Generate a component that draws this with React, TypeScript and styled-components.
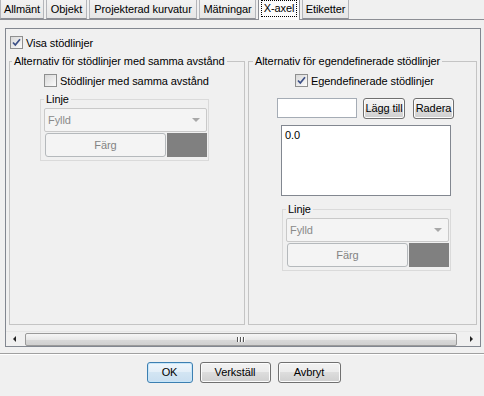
import React from 'react'
import styled, { createGlobalStyle } from 'styled-components'

const GlobalStyle = createGlobalStyle`
    html, body {
        margin: 0;
        padding: 0;
        background: #f0f0f0;
    }
    body {
        font-family: "Liberation Sans", Arial, sans-serif;
        font-size: 11px;
        letter-spacing: -0.08px;
        color: #000;
    }
`

const Dialog = styled.div`
    width: 484px;
    height: 396px;
    overflow: hidden;
    background: #f0f0f0;
    display: flex;
    flex-direction: column;
`

const TabBar = styled.div`
    display: flex;
    gap: 2px;
    height: 19px;
    align-items: flex-start;
    position: relative;
    z-index: 1;
`

const Tab = styled.div<{ $w: number; $active?: boolean }>`
    width: ${(p) => p.$w}px;
    height: ${(p) => (p.$active ? 20 : 19)}px;
    box-sizing: border-box;
    border: 1px solid ${(p) => (p.$active ? '#8c8e94' : '#b4b6bb')};
    border-top: none;
    border-bottom: ${(p) => (p.$active ? 'none' : '1px solid #8c8e94')};
    background: ${(p) =>
        p.$active ? '#fcfcfc' : 'linear-gradient(#f2f2f2, #e6e6e6)'};
    display: flex;
    align-items: center;
    justify-content: center;
    padding-bottom: ${(p) => (p.$active ? 4 : 1)}px;
    white-space: nowrap;
`

const FocusText = styled.span`
    outline: 1px dotted #000;
    padding: 1px 2px 2px;
`

const TabPanel = styled.div`
    border-top: 1px solid #8c8e94;
    padding: 8px 3px 0 5px;
`

const ScrollPane = styled.div`
    width: 476px;
    height: 319px;
    box-sizing: border-box;
    border: 1px solid #828790;
    display: flex;
    flex-direction: column;
`

const Viewport = styled.div`
    height: 302px;
    overflow: hidden;
    padding-top: 5px;
    box-sizing: border-box;
    display: flex;
    flex-direction: column;
`

const CheckRow = styled.label<{ $ml: number }>`
    display: flex;
    align-items: center;
    gap: 3px;
    height: 17px;
    margin-left: ${(p) => p.$ml}px;
    white-space: nowrap;
`

const Box = styled.span`
    width: 13px;
    height: 13px;
    box-sizing: border-box;
    border: 1px solid #8e8f8f;
    background: linear-gradient(135deg, #d8d8d8, #fbfbfb);
    display: inline-flex;
    align-items: center;
    justify-content: center;
    flex: none;
`

const Groups = styled.div`
    display: flex;
    gap: 3px;
    margin: 4px 0 0 3px;
`

const Group = styled.fieldset<{ $w: number; $pl: number }>`
    width: ${(p) => p.$w}px;
    height: 270px;
    box-sizing: border-box;
    margin: 0;
    padding: 4px 0 0 ${(p) => p.$pl}px;
    border: 1px solid #c4c4c4;
    display: flex;
    flex-direction: column;
    align-items: flex-start;
    min-width: 0;
`

const Legend = styled.legend`
    padding: 0 2px;
    line-height: 13px;
    white-space: nowrap;
`

const LineGroup = styled.fieldset<{ $ml: number; $mt: number }>`
    width: 169px;
    box-sizing: border-box;
    margin: ${(p) => p.$mt}px 0 0 ${(p) => p.$ml}px;
    padding: 2px 1px 3px 3px;
    border: 1px solid #dadada;
    min-width: 0;
`

const Combo = styled.div`
    width: 163px;
    height: 24px;
    box-sizing: border-box;
    border: 1px solid #c9c9c9;
    border-radius: 2px;
    background: #f4f4f4;
    color: #8a8a8a;
    display: flex;
    align-items: center;
    justify-content: space-between;
    padding: 0 6px 0 3px;
`

const ComboArrow = styled.span`
    width: 0;
    height: 0;
    border-left: 4px solid transparent;
    border-right: 4px solid transparent;
    border-top: 4px solid #a8a8a8;
`

const ColorRow = styled.div`
    display: flex;
    gap: 1px;
    margin: 1px 0 0 1px;
`

const ColorButton = styled.div`
    width: 121px;
    height: 24px;
    box-sizing: border-box;
    border: 1px solid #b5b9bc;
    border-radius: 3px;
    background: #f4f4f4;
    color: #838383;
    display: flex;
    align-items: center;
    justify-content: center;
`

const Swatch = styled.div`
    width: 40px;
    height: 24px;
    background: #808080;
`

const InputRow = styled.div`
    display: flex;
    align-items: flex-start;
    margin: 9px 0 0 24px;
`

const TextField = styled.div`
    width: 80px;
    height: 20px;
    box-sizing: border-box;
    border: 1px solid #a5acb5;
    background: #fff;
    margin-right: 6px;
`

const Button = styled.div<{ $w: number; $default?: boolean }>`
    width: ${(p) => p.$w}px;
    height: 21px;
    box-sizing: border-box;
    border: 1px solid ${(p) => (p.$default ? '#3c7fb1' : '#707070')};
    border-radius: 3px;
    background: ${(p) =>
        p.$default
            ? 'linear-gradient(#eef6fc, #e3eef8 50%, #d3e5f3 50%, #c9def0)'
            : 'linear-gradient(#f2f2f2, #ebebeb 50%, #dddddd 50%, #cfcfcf)'};
    box-shadow: inset 0 0 0 1px ${(p) => (p.$default ? '#c7e6f9' : '#fcfcfc')};
    display: flex;
    align-items: center;
    justify-content: center;
    white-space: nowrap;
    padding-bottom: 1px;
`

const SmallButton = styled(Button)`
    margin-right: 8px;
    padding: 0 0 1px;
`

const ListBox = styled.div`
    width: 170px;
    height: 71px;
    box-sizing: border-box;
    border: 1px solid #828790;
    background: #fff;
    margin: 6px 0 0 28px;
    padding: 3px 3px;
`

const ScrollBar = styled.div`
    height: 15px;
    display: flex;
    align-items: center;
    border-top: 1px solid #e6e6e6;
    box-sizing: border-box;
`

const ArrowCell = styled.div`
    width: 17px;
    height: 15px;
    display: flex;
    align-items: center;
    justify-content: center;
`

const Arrow = styled.span<{ $dir: 'left' | 'right' }>`
    width: 0;
    height: 0;
    border-top: 3px solid transparent;
    border-bottom: 3px solid transparent;
    ${(p) =>
        p.$dir === 'left'
            ? 'border-right: 3px solid #222;'
            : 'border-left: 3px solid #222;'}
`

const Thumb = styled.div`
    width: 432px;
    height: 13px;
    margin-left: 2px;
    box-sizing: border-box;
    border: 1px solid #9a9a9a;
    border-radius: 2px;
    background: linear-gradient(#f6f6f6, #e8e8e8 50%, #d9d9d9 50%, #d0d0d0);
    display: flex;
    align-items: center;
    justify-content: center;
    gap: 1px;
`

const Grip = styled.span`
    width: 1px;
    height: 5px;
    background: #555;
    box-shadow: 1px 0 0 #fff;
    margin-right: 1px;
`

const Spacer = styled.div`
    flex: 1;
`

const Separator = styled.div`
    margin-top: 6px;
    border-top: 1px solid #a0a0a0;
    border-bottom: 1px solid #fff;
`

const ButtonBar = styled.div`
    display: flex;
    justify-content: center;
    gap: 7px;
    padding: 7px 0 0 3px;
`

const Check: React.FC = () => (
    <svg width="9" height="9" viewBox="0 0 9 9">
        <path
            d="M1 4.5 L3.3 7 L8 1.2"
            fill="none"
            stroke="#3b4f86"
            strokeWidth="1.7"
        />
    </svg>
)

const CheckBox: React.FC<{ label: string; checked?: boolean; ml: number }> = ({
    label,
    checked,
    ml,
}) => (
    <CheckRow $ml={ml}>
        <Box>{checked && <Check />}</Box>
        {label}
    </CheckRow>
)

const LineSettings: React.FC<{ ml: number; mt: number }> = ({ ml, mt }) => (
    <LineGroup $ml={ml} $mt={mt}>
        <Legend>Linje</Legend>
        <Combo>
            Fylld
            <ComboArrow />
        </Combo>
        <ColorRow>
            <ColorButton>Färg</ColorButton>
            <Swatch />
        </ColorRow>
    </LineGroup>
)

const tabs = [
    { label: 'Allmänt', w: 44 },
    { label: 'Objekt', w: 41 },
    { label: 'Projekterad kurvatur', w: 108 },
    { label: 'Mätningar', w: 57 },
    { label: 'X-axel', w: 42, active: true },
    { label: 'Etiketter', w: 47 },
]

const App: React.FC = () => {
    return (
        <Dialog>
            <GlobalStyle />
            <TabBar>
                {tabs.map((t) => (
                    <Tab key={t.label} $w={t.w} $active={t.active}>
                        {t.active ? <FocusText>{t.label}</FocusText> : t.label}
                    </Tab>
                ))}
            </TabBar>
            <TabPanel>
                <ScrollPane>
                    <Viewport>
                        <CheckBox label="Visa stödlinjer" checked ml={4} />
                        <Groups>
                            <Group $w={236} $pl={2}>
                                <Legend>Alternativ för stödlinjer med samma avstånd</Legend>
                                <CheckBox label="Stödlinjer med samma avstånd" ml={32} />
                                <LineSettings ml={28} mt={4} />
                            </Group>
                            <Group $w={229} $pl={4}>
                                <Legend>Alternativ för egendefinerade stödlinjer</Legend>
                                <CheckBox label="Egendefinerade stödlinjer" checked ml={42} />
                                <InputRow>
                                    <TextField />
                                    <SmallButton $w={42}>Lägg till</SmallButton>
                                    <SmallButton $w={41}>Radera</SmallButton>
                                </InputRow>
                                <ListBox>0.0</ListBox>
                                <LineSettings ml={29} mt={7} />
                            </Group>
                        </Groups>
                    </Viewport>
                    <ScrollBar>
                        <ArrowCell>
                            <Arrow $dir="left" />
                        </ArrowCell>
                        <Thumb>
                            <Grip />
                            <Grip />
                            <Grip />
                        </Thumb>
                        <Spacer />
                        <ArrowCell>
                            <Arrow $dir="right" />
                        </ArrowCell>
                    </ScrollBar>
                </ScrollPane>
            </TabPanel>
            <Separator />
            <ButtonBar>
                <Button $w={46} $default>
                    OK
                </Button>
                <Button $w={71}>Verkställ</Button>
                <Button $w={63}>Avbryt</Button>
            </ButtonBar>
        </Dialog>
    )
}

export default App
